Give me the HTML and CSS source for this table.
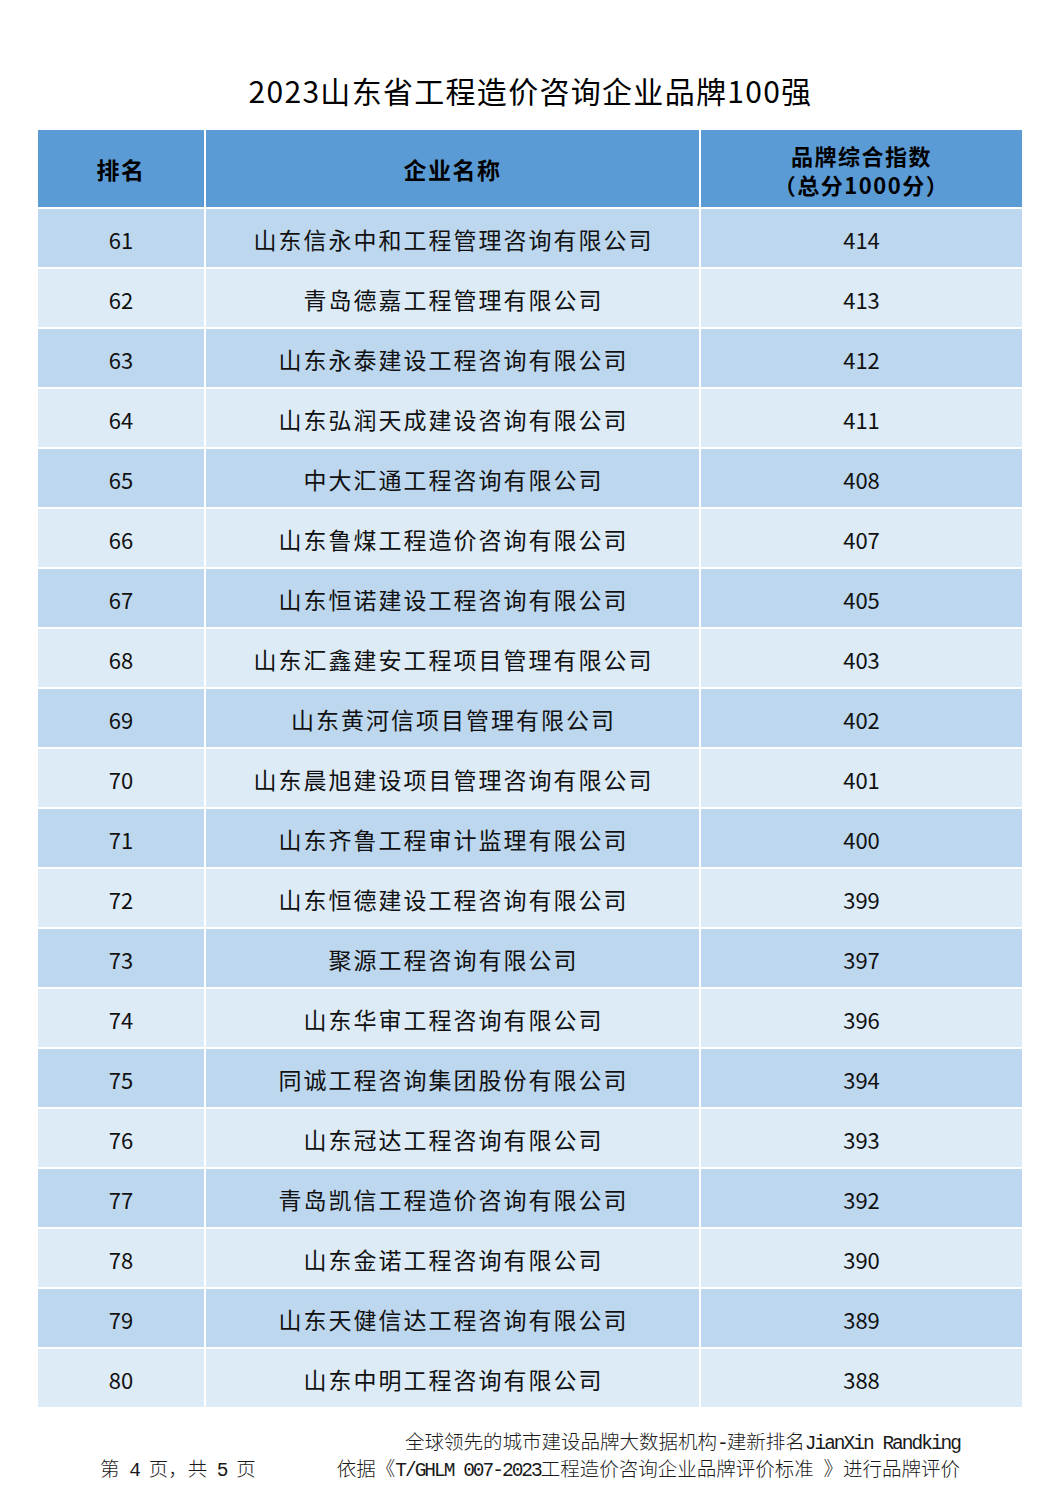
FILE: index.html
```html
<!DOCTYPE html>
<html lang="zh-CN">
<head>
<meta charset="utf-8">
<title>2023山东省工程造价咨询企业品牌100强</title>
<link rel="stylesheet" href="styles.css">
</head>
<body>
<h1 class="title">2023山东省工程造价咨询企业品牌100强</h1>
<div class="table">
  <div class="cell head">排名</div>
  <div class="cell head">企业名称</div>
  <div class="cell head two"><span class="hl">品牌综合指数</span><span class="hl">（总分1000分）</span></div>

  <div class="cell odd num">61</div><div class="cell odd name">山东信永中和工程管理咨询有限公司</div><div class="cell odd num">414</div>
  <div class="cell even num">62</div><div class="cell even name">青岛德嘉工程管理有限公司</div><div class="cell even num">413</div>
  <div class="cell odd num">63</div><div class="cell odd name">山东永泰建设工程咨询有限公司</div><div class="cell odd num">412</div>
  <div class="cell even num">64</div><div class="cell even name">山东弘润天成建设咨询有限公司</div><div class="cell even num">411</div>
  <div class="cell odd num">65</div><div class="cell odd name">中大汇通工程咨询有限公司</div><div class="cell odd num">408</div>
  <div class="cell even num">66</div><div class="cell even name">山东鲁煤工程造价咨询有限公司</div><div class="cell even num">407</div>
  <div class="cell odd num">67</div><div class="cell odd name">山东恒诺建设工程咨询有限公司</div><div class="cell odd num">405</div>
  <div class="cell even num">68</div><div class="cell even name">山东汇鑫建安工程项目管理有限公司</div><div class="cell even num">403</div>
  <div class="cell odd num">69</div><div class="cell odd name">山东黄河信项目管理有限公司</div><div class="cell odd num">402</div>
  <div class="cell even num">70</div><div class="cell even name">山东晨旭建设项目管理咨询有限公司</div><div class="cell even num">401</div>
  <div class="cell odd num">71</div><div class="cell odd name">山东齐鲁工程审计监理有限公司</div><div class="cell odd num">400</div>
  <div class="cell even num">72</div><div class="cell even name">山东恒德建设工程咨询有限公司</div><div class="cell even num">399</div>
  <div class="cell odd num">73</div><div class="cell odd name">聚源工程咨询有限公司</div><div class="cell odd num">397</div>
  <div class="cell even num">74</div><div class="cell even name">山东华审工程咨询有限公司</div><div class="cell even num">396</div>
  <div class="cell odd num">75</div><div class="cell odd name">同诚工程咨询集团股份有限公司</div><div class="cell odd num">394</div>
  <div class="cell even num">76</div><div class="cell even name">山东冠达工程咨询有限公司</div><div class="cell even num">393</div>
  <div class="cell odd num">77</div><div class="cell odd name">青岛凯信工程造价咨询有限公司</div><div class="cell odd num">392</div>
  <div class="cell even num">78</div><div class="cell even name">山东金诺工程咨询有限公司</div><div class="cell even num">390</div>
  <div class="cell odd num">79</div><div class="cell odd name">山东天健信达工程咨询有限公司</div><div class="cell odd num">389</div>
  <div class="cell even num">80</div><div class="cell even name">山东中明工程咨询有限公司</div><div class="cell even num">388</div>
</div>
<div class="footer">
  <div class="page">第<span class="lat"> 4 </span>页，共<span class="lat"> 5 </span>页</div>
  <div class="notes">
    <div>全球领先的城市建设品牌大数据机构<span class="lat">-</span>建新排名<span class="lat">JianXin Randking</span></div>
    <div>依据《<span class="lat">T/GHLM 007-2023</span>工程造价咨询企业品牌评价标准<span class="lat"> </span>》进行品牌评价</div>
  </div>
</div>
</body>
</html>
```

FILE: styles.css
```css
html, body {
  margin: 0;
  padding: 0;
  background: #ffffff;
}
body {
  width: 1061px;
  font-family: "Noto Sans CJK SC", "Noto Sans", sans-serif;
  color: #111111;
}
.title {
  margin: 70px 0 0 0;
  height: 40px;
  line-height: 40px;
  font-size: 30px;
  font-weight: 400;
  letter-spacing: 1.3px;
  text-align: center;
  color: #000000;
}
.table {
  margin: 20px 0 0 38px;
  width: 984px;
  display: grid;
  grid-template-columns: 166px 493px 321px;
  grid-template-rows: 77px;
  grid-auto-rows: 58px;
  gap: 2px;
  background: #ffffff;
}
.cell {
  display: flex;
  align-items: center;
  justify-content: center;
  text-align: center;
}
.head {
  background: #5b9bd5;
  font-weight: 700;
  font-size: 23px;
  letter-spacing: 1.5px;
  color: #000000;
}
.head.two {
  flex-direction: column;
  gap: 0;
  font-size: 22px;
  padding-top: 2px;
}
.hl {
  display: block;
  height: 29px;
  line-height: 29px;
}
.odd { background: #bdd7ee; }
.even { background: #ddebf7; }
.name {
  font-size: 23px;
  letter-spacing: 2px;
  padding-left: 2px;
  padding-top: 2px;
}
.num {
  font-size: 22px;
  padding-top: 2px;
}
.footer {
  margin: 22px 0 0 100px;
  width: 860px;
  display: flex;
  justify-content: space-between;
  align-items: flex-end;
  font-size: 19.5px;
  line-height: 24px;
  color: #1a1a1a;
  font-weight: 300;
}
.notes {
  text-align: right;
}
.page {
  white-space: pre;
}
.lat {
  font-family: "Liberation Mono", monospace;
  letter-spacing: -2px;
  font-weight: 400;
  white-space: pre;
}
```
